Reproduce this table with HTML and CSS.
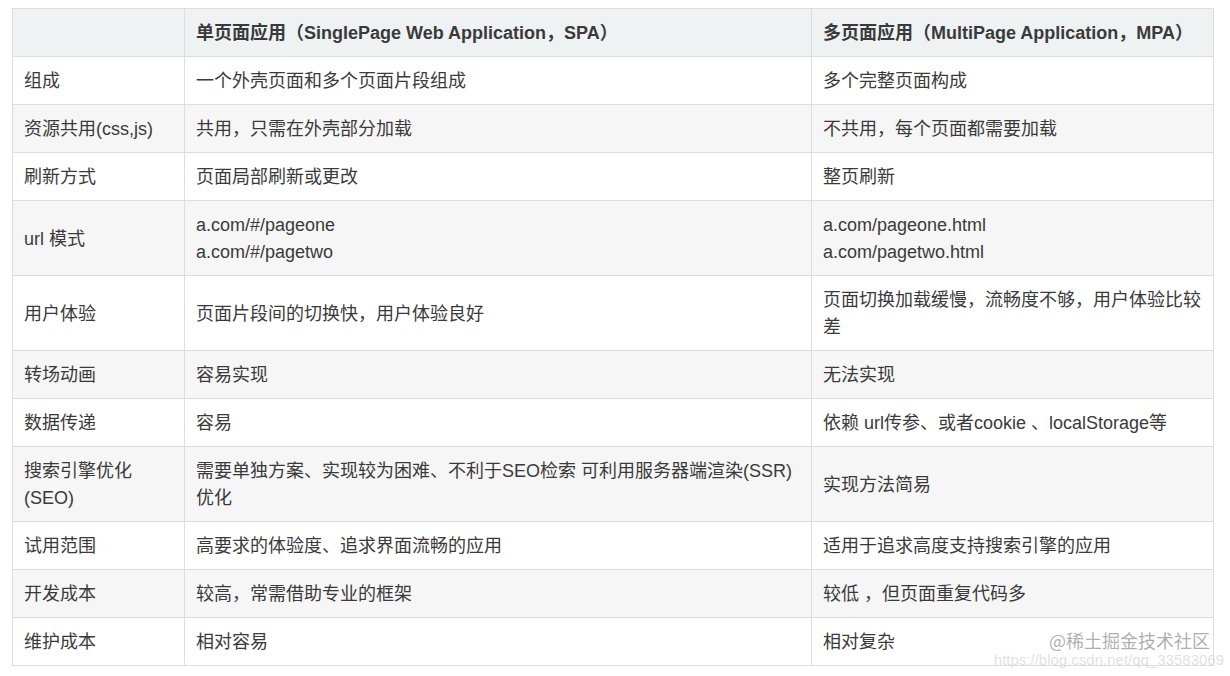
FILE: index.html
```html
<!DOCTYPE html>
<html lang="zh-CN">
<head>
<meta charset="utf-8">
<title>SPA vs MPA</title>
<link rel="stylesheet" href="styles.css">
</head>
<body>
<div class="page">
  <table class="cmp">
    <colgroup>
      <col class="c1"><col class="c2"><col class="c3">
    </colgroup>
    <thead>
      <tr><th></th><th>单页面应用（SinglePage Web Application，SPA）</th><th>多页面应用（MultiPage Application，MPA）</th></tr>
    </thead>
    <tbody>
      <tr><td>组成</td><td>一个外壳页面和多个页面片段组成</td><td>多个完整页面构成</td></tr>
      <tr><td>资源共用(css,js)</td><td>共用，只需在外壳部分加载</td><td>不共用，每个页面都需要加载</td></tr>
      <tr><td>刷新方式</td><td>页面局部刷新或更改</td><td>整页刷新</td></tr>
      <tr><td>url 模式</td><td>a.com/#/pageone<br>a.com/#/pagetwo</td><td>a.com/pageone.html<br>a.com/pagetwo.html</td></tr>
      <tr><td>用户体验</td><td>页面片段间的切换快，用户体验良好</td><td>页面切换加载缓慢，流畅度不够，用户体验比较差</td></tr>
      <tr><td>转场动画</td><td>容易实现</td><td>无法实现</td></tr>
      <tr><td>数据传递</td><td>容易</td><td>依赖 url传参、或者cookie 、localStorage等</td></tr>
      <tr><td>搜索引擎优化(SEO)</td><td>需要单独方案、实现较为困难、不利于SEO检索 可利用服务器端渲染(SSR)优化</td><td>实现方法简易</td></tr>
      <tr><td>试用范围</td><td>高要求的体验度、追求界面流畅的应用</td><td>适用于追求高度支持搜索引擎的应用</td></tr>
      <tr><td>开发成本</td><td>较高，常需借助专业的框架</td><td>较低 ，但页面重复代码多</td></tr>
      <tr><td>维护成本</td><td>相对容易</td><td>相对复杂</td></tr>
    </tbody>
  </table>
  <div class="wm">
    <span class="wm-main">@稀土掘金技术社区</span>
    <span class="wm-url">https://blog.csdn.net/qq_33583069</span>
  </div>
</div>
</body>
</html>
```

FILE: styles.css
```css
html, body {
  margin: 0;
  padding: 0;
  background: #ffffff;
}
.page {
  position: relative;
  padding: 8px 0 0 12px;
  width: 1230px;
  height: 676px;
  box-sizing: border-box;
}
.cmp {
  border-collapse: collapse;
  table-layout: fixed;
  width: 1201px;
  font-family: "Liberation Sans", "Noto Sans CJK SC", sans-serif;
  font-size: 18px;
  line-height: 27px;
  color: #3a3a3a;
}
.c1 { width: 172px; }
.c2 { width: 627px; }
.c3 { width: 402px; }
.cmp th, .cmp td {
  border: 1px solid #dddddd;
  padding: 11px 11px 9px;
  text-align: left;
  vertical-align: middle;
}
.cmp th {
  background: #eff2f3;
  font-weight: bold;
  color: #3a3a3a;
}
.cmp tbody tr:nth-child(even) td {
  background: #f6f6f6;
}
.wm {
  position: absolute;
  top: 631px;
  right: 18px;
  display: flex;
  flex-direction: column;
  align-items: flex-end;
  gap: 2px;
  pointer-events: none;
}
.wm-main {
  font-family: "Noto Sans CJK SC", sans-serif;
  font-size: 18px;
  line-height: 19px;
  color: rgba(140, 140, 140, 0.7);
  margin-right: 2px;
}
.wm-url {
  font-family: "Liberation Sans", sans-serif;
  font-size: 15px;
  line-height: 15px;
  color: rgba(200, 200, 200, 0.55);
  margin-right: -12px;
}
```
